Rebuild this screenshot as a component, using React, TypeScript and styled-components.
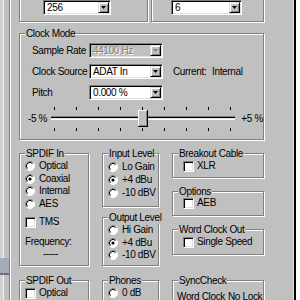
import React from "react";
import styled, { createGlobalStyle } from "styled-components";

const GlobalStyle = createGlobalStyle`
  html, body {
    margin: 0;
    padding: 0;
    width: 300px;
    height: 300px;
    overflow: hidden;
    background: #c0c0c0;
  }
  body {
    font-family: "Liberation Sans", Arial, sans-serif;
    font-size: 10px;
    letter-spacing: -0.35px;
    line-height: 12px;
    color: #000;
  }
`;

const Window = styled.div`
  display: flex;
  width: 300px;
  height: 300px;
  overflow: hidden;
`;

const LeftEdge = styled.div`
  width: 11px;
  flex: none;
  background: linear-gradient(
    to right,
    #d2d2d2 0 3px,
    #f4f4f4 3px 4px,
    #c0c0c0 4px 9px,
    #808080 9px 10px,
    #ffffff 10px 11px
  );
`;

const BlueTab = styled.div`
  width: 9px;
  height: 15px;
  margin-top: 258px;
  background: #a3abba;
  border-bottom: 2px solid #6a7280;
`;

const RightEdge = styled.div`
  width: 7px;
  flex: none;
  background: linear-gradient(
    to right,
    #dfdfdf 0 1px,
    #000 1px 3px,
    #fff 3px 7px
  );
`;

const Dialog = styled.div`
  flex: 1;
  display: flex;
  flex-direction: column;
  padding-left: 8px;
  margin-top: -10px;
`;

const Row = styled.div<{ $gap?: number; $mt?: number }>`
  display: flex;
  align-items: flex-start;
  gap: ${(p) => p.$gap ?? 0}px;
  margin-top: ${(p) => p.$mt ?? 0}px;
`;

const Column = styled.div`
  display: flex;
  flex-direction: column;
`;

const Group = styled.div<{ $w: number; $h: number; $pad?: string; $mt?: number }>`
  position: relative;
  box-sizing: border-box;
  width: ${(p) => p.$w}px;
  height: ${(p) => p.$h}px;
  margin-top: ${(p) => p.$mt ?? 0}px;
  padding: ${(p) => p.$pad ?? "6px 0 0 5px"};
  border: 1px solid #808080;
  box-shadow: inset 1px 1px 0 #fff, 1px 1px 0 #fff;
  flex: none;
`;

const GroupTitle = styled.span`
  position: absolute;
  top: -7px;
  left: 5px;
  padding: 0 1px;
  line-height: 13px;
  background: #c0c0c0;
  white-space: nowrap;
`;

const ComboBox = styled.div<{ $w: number; $disabled?: boolean }>`
  box-sizing: border-box;
  width: ${(p) => p.$w}px;
  height: 15px;
  display: flex;
  padding: 1px;
  border: 1px solid;
  border-color: #808080 #fff #fff #808080;
  box-shadow: inset 1px 1px 0 #000, inset -1px -1px 0 #dfdfdf;
  background: ${(p) => (p.$disabled ? "#c0c0c0" : "#fff")};
  flex: none;
`;

const ComboText = styled.span<{ $disabled?: boolean }>`
  flex: 1;
  padding-left: 2px;
  line-height: 11px;
  white-space: nowrap;
  overflow: hidden;
  color: ${(p) => (p.$disabled ? "#808080" : "#000")};
  text-shadow: ${(p) => (p.$disabled ? "1px 1px 0 #fff" : "none")};
`;

const ComboArrow = styled.span`
  box-sizing: border-box;
  width: 11px;
  display: flex;
  align-items: center;
  justify-content: center;
  background: #c0c0c0;
  border: 1px solid;
  border-color: #dfdfdf #000 #000 #dfdfdf;
  box-shadow: inset 1px 1px 0 #fff, inset -1px -1px 0 #808080;
`;

const FieldRow = styled.div<{ $mt?: number }>`
  display: flex;
  align-items: center;
  height: 15px;
  padding-left: 4px;
  margin-top: ${(p) => p.$mt ?? 0}px;
`;

const FieldLabel = styled.span`
  width: 57px;
  white-space: nowrap;
`;

const InfoLabel = styled.span<{ $w?: number; $ml?: number }>`
  width: ${(p) => (p.$w ? `${p.$w}px` : "auto")};
  margin-left: ${(p) => p.$ml ?? 0}px;
  white-space: nowrap;
`;

const SliderRow = styled.div`
  display: flex;
  align-items: center;
  height: 27px;
  margin-top: 5px;
`;

const SliderEnd = styled.span<{ $w: number; $ml?: number }>`
  width: ${(p) => p.$w}px;
  margin-left: ${(p) => p.$ml ?? 0}px;
  white-space: nowrap;
`;

const Option = styled.div<{ $h?: number; $gap?: number; $mt?: number }>`
  display: flex;
  align-items: center;
  height: ${(p) => p.$h ?? 12.5}px;
  gap: ${(p) => p.$gap ?? 4}px;
  margin-top: ${(p) => p.$mt ?? 0}px;
  white-space: nowrap;
`;

const CheckMark = styled.span`
  box-sizing: border-box;
  width: 11px;
  height: 11px;
  flex: none;
  background: #fff;
  border: 1px solid;
  border-color: #808080 #fff #fff #808080;
  box-shadow: inset 1px 1px 0 #000, inset -1px -1px 0 #dfdfdf;
`;

const PlainText = styled.div<{ $mt?: number; $pl?: number }>`
  height: 12px;
  margin-top: ${(p) => p.$mt ?? 0}px;
  padding-left: ${(p) => p.$pl ?? 0}px;
  white-space: nowrap;
`;

const Arrow = ({ disabled }: { disabled?: boolean }) => (
  <svg width="5" height="3" viewBox="0 0 5 3">
    <path d="M0 0H5L2.5 3Z" fill={disabled ? "#808080" : "#000"} />
  </svg>
);

const Combo = ({
  w,
  value,
  disabled,
}: {
  w: number;
  value: string;
  disabled?: boolean;
}) => (
  <ComboBox $w={w} $disabled={disabled}>
    <ComboText $disabled={disabled}>{value}</ComboText>
    <ComboArrow>
      <Arrow disabled={disabled} />
    </ComboArrow>
  </ComboBox>
);

const RadioMark = ({ checked }: { checked?: boolean }) => (
  <svg width="10" height="10" viewBox="0 0 10 10" style={{ flex: "none" }}>
    <circle cx="5" cy="5" r="4.5" fill="#fff" />
    <path d="M1.8 8.2A4.5 4.5 0 0 1 8.2 1.8" stroke="#808080" fill="none" />
    <path d="M8.2 1.8A4.5 4.5 0 0 1 1.8 8.2" stroke="#fff" fill="none" />
    <path d="M2.5 7.5A3.5 3.5 0 0 1 7.5 2.5" stroke="#000" fill="none" />
    {checked && <circle cx="5" cy="5" r="1.6" fill="#000" />}
  </svg>
);

const Radio = ({
  label,
  checked,
  h,
}: {
  label: string;
  checked?: boolean;
  h?: number;
}) => (
  <Option $h={h}>
    <RadioMark checked={checked} />
    <span>{label}</span>
  </Option>
);

const Check = ({ label, mt, h }: { label: string; mt?: number; h?: number }) => (
  <Option $gap={3} $mt={mt} $h={h ?? 12}>
    <CheckMark />
    <span>{label}</span>
  </Option>
);

const PitchSlider = () => {
  const ticks = Array.from({ length: 9 }, (_, i) => 3 + i * 22);
  return (
    <svg width="186" height="27" viewBox="0 0 186 27" style={{ flex: "none" }}>
      {ticks.map((x) => (
        <g key={x}>
          <rect x={x} y="2" width="1" height="3" fill="#000" />
          <rect x={x} y="23" width="1" height="3" fill="#000" />
        </g>
      ))}
      <rect x="0" y="11" width="184" height="1" fill="#808080" />
      <rect x="0" y="12" width="184" height="1" fill="#000" />
      <rect x="0" y="13" width="184" height="1" fill="#dfdfdf" />
      <rect x="0" y="14" width="184" height="1" fill="#fff" />
      <rect x="87" y="5" width="10" height="17" fill="#000" />
      <rect x="87" y="5" width="9" height="16" fill="#fff" />
      <rect x="88" y="6" width="8" height="15" fill="#808080" />
      <rect x="88" y="6" width="7" height="14" fill="#c0c0c0" />
    </svg>
  );
};

export default function App() {
  return (
    <>
      <GlobalStyle />
      <Window>
        <LeftEdge>
          <BlueTab />
        </LeftEdge>
        <Dialog>
          <Row $gap={3}>
            <Group $w={129} $h={32} $pad="9px 0 0 23px">
              <Combo w={68} value="256" />
            </Group>
            <Group $w={113} $h={32} $pad="9px 0 0 19px">
              <Combo w={71} value="6" />
            </Group>
          </Row>

          <Group $w={245} $h={107} $mt={11} $pad="9px 0 0 8px">
            <GroupTitle>Clock Mode</GroupTitle>
            <FieldRow>
              <FieldLabel>Sample Rate</FieldLabel>
              <Combo w={74} value="44100 Hz" disabled />
            </FieldRow>
            <FieldRow $mt={6}>
              <FieldLabel>Clock Source</FieldLabel>
              <Combo w={74} value="ADAT In" />
              <InfoLabel $w={39} $ml={10}>
                Current:
              </InfoLabel>
              <InfoLabel>Internal</InfoLabel>
            </FieldRow>
            <FieldRow $mt={6}>
              <FieldLabel>Pitch</FieldLabel>
              <Combo w={74} value="0.000 %" />
            </FieldRow>
            <SliderRow>
              <SliderEnd $w={24}>-5 %</SliderEnd>
              <PitchSlider />
              <SliderEnd $w={22} $ml={4}>
                +5 %
              </SliderEnd>
            </SliderRow>
          </Group>

          <Row $gap={13} $mt={13}>
            <Column>
              <Group $w={70} $h={113}>
                <GroupTitle>SPDIF In</GroupTitle>
                <Radio label="Optical" />
                <Radio label="Coaxial" checked />
                <Radio label="Internal" />
                <Radio label="AES" />
                <Check label="TMS" mt={6} />
                <PlainText $mt={8}>Frequency:</PlainText>
                <PlainText $pl={18}>-----</PlainText>
              </Group>
              <Group $w={70} $h={40} $mt={14}>
                <GroupTitle>SPDIF Out</GroupTitle>
                <Check label="Optical" />
              </Group>
            </Column>

            <Column>
              <Group $w={57} $h={54}>
                <GroupTitle>Input Level</GroupTitle>
                <Radio label="Lo Gain" h={13} />
                <Radio label="+4 dBu" checked h={13} />
                <Radio label="-10 dBV" h={13} />
              </Group>
              <Group $w={57} $h={49} $mt={10}>
                <GroupTitle>Output Level</GroupTitle>
                <Radio label="Hi Gain" />
                <Radio label="+4 dBu" checked />
                <Radio label="-10 dBV" />
              </Group>
              <Group $w={57} $h={40} $mt={14}>
                <GroupTitle>Phones</GroupTitle>
                <Radio label="0 dB" h={12} />
              </Group>
            </Column>

            <Column>
              <Group $w={92} $h={25} $pad="6px 0 0 10px">
                <GroupTitle>Breakout Cable</GroupTitle>
                <Check label="XLR" />
              </Group>
              <Group $w={92} $h={25} $mt={13} $pad="5px 0 0 10px">
                <GroupTitle>Options</GroupTitle>
                <Check label="AEB" />
              </Group>
              <Group $w={92} $h={26} $mt={13} $pad="6px 0 0 10px">
                <GroupTitle>Word Clock Out</GroupTitle>
                <Check label="Single Speed" />
              </Group>
              <Group $w={92} $h={40} $mt={25} $pad="10px 0 0 4px">
                <GroupTitle>SyncCheck</GroupTitle>
                <Option $h={12} $gap={0}>
                  <InfoLabel $w={51}>Word Clock</InfoLabel>
                  <InfoLabel>No Lock</InfoLabel>
                </Option>
              </Group>
            </Column>
          </Row>
        </Dialog>
        <RightEdge />
      </Window>
    </>
  );
}
